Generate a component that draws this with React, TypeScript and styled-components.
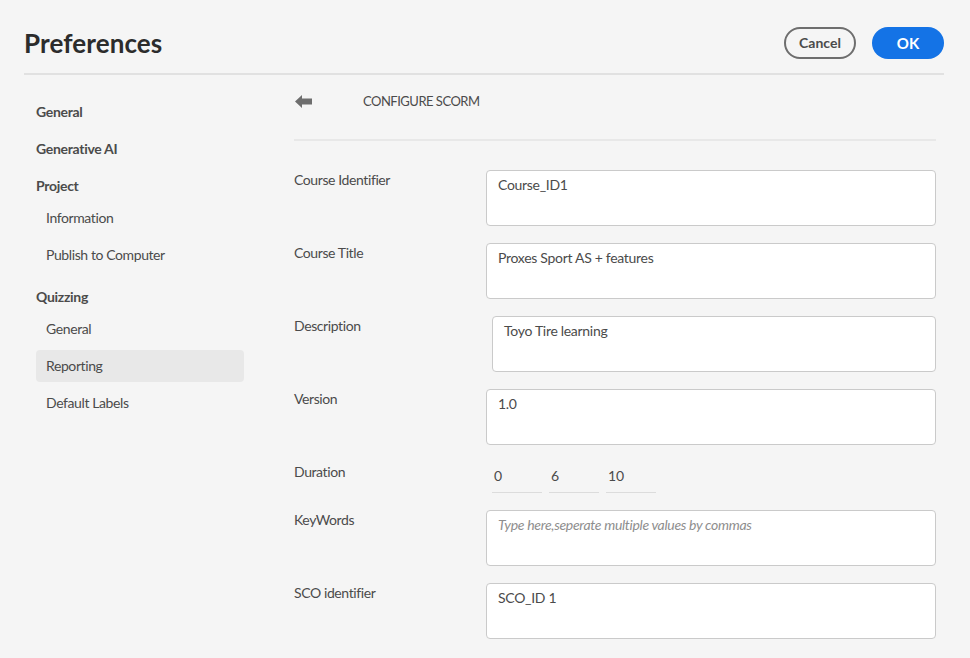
import React from 'react';
import styled, { createGlobalStyle } from 'styled-components';

const GlobalStyle = createGlobalStyle`
  html, body {
    margin: 0;
    padding: 0;
    background: #f5f5f5;
  }
  body {
    font-family: Lato, 'Open Sans', sans-serif;
    color: #4b4b4b;
  }
`;

interface NavGroup {
  title: string;
  items: string[];
}

const navGroups: NavGroup[] = [
  { title: 'General', items: [] },
  { title: 'Generative AI', items: [] },
  { title: 'Project', items: ['Information', 'Publish to Computer'] },
  { title: 'Quizzing', items: ['General', 'Reporting', 'Default Labels'] },
];

const fields = [
  { label: 'Course Identifier', value: 'Course_ID1' },
  { label: 'Course Title', value: 'Proxes Sport AS + features' },
  { label: 'Description', value: 'Toyo Tire learning', shifted: true },
  { label: 'Version', value: '1.0' },
];

const BackArrow = () => (
  <svg width="17" height="13" viewBox="0 0 17 13">
    <polygon points="0,6.5 7,0 7,3.5 17,3.5 17,9.5 7,9.5 7,13" fill="#6e6e6e" />
  </svg>
);

const App = () => {
  return (
    <>
      <GlobalStyle />
      <Page>
        <Header>
          <Title>Preferences</Title>
          <Actions>
            <CancelButton>Cancel</CancelButton>
            <OkButton>OK</OkButton>
          </Actions>
        </Header>
        <Body>
          <Sidebar>
            {navGroups.map((group) => (
              <Group key={group.title}>
                <GroupTitle>{group.title}</GroupTitle>
                {group.items.length > 0 && (
                  <SubList>
                    {group.items.map((item) => (
                      <SubItem key={item} active={group.title === 'Quizzing' && item === 'Reporting'}>
                        {item}
                      </SubItem>
                    ))}
                  </SubList>
                )}
              </Group>
            ))}
          </Sidebar>
          <Content>
            <ContentHeader>
              <BackButton>
                <BackArrow />
              </BackButton>
              <SectionTitle>CONFIGURE SCORM</SectionTitle>
            </ContentHeader>
            <Form>
              {fields.map((f) => (
                <Row key={f.label}>
                  <Label>{f.label}</Label>
                  <TextBox shifted={!!f.shifted}>{f.value}</TextBox>
                </Row>
              ))}
              <Row>
                <Label>Duration</Label>
                <DurationGroup>
                  <DurationField>0</DurationField>
                  <DurationField>6</DurationField>
                  <DurationField>10</DurationField>
                </DurationGroup>
              </Row>
              <Row>
                <Label>KeyWords</Label>
                <TextBox shifted={false}>
                  <Placeholder>Type here,seperate multiple values by commas</Placeholder>
                </TextBox>
              </Row>
              <Row>
                <Label>SCO identifier</Label>
                <TextBox shifted={false}>SCO_ID 1</TextBox>
              </Row>
            </Form>
          </Content>
        </Body>
      </Page>
    </>
  );
};

export default App;

const Page = styled.div`
  padding: 0 26px 0 24px;
  min-height: 658px;
  box-sizing: border-box;
`;

const Header = styled.header`
  height: 75px;
  box-sizing: border-box;
  padding-top: 12px;
  display: flex;
  align-items: center;
  justify-content: space-between;
  border-bottom: 2px solid #e1e1e1;
`;

const Title = styled.h1`
  margin: 0;
  font-size: 26px;
  font-weight: 700;
  color: #2c2c2c;
  letter-spacing: 0.1px;
`;

const Actions = styled.div`
  display: flex;
  gap: 16px;
`;

const CancelButton = styled.button`
  width: 72px;
  height: 32px;
  border-radius: 16px;
  border: 2px solid #6e6e6e;
  background: transparent;
  color: #4b4b4b;
  font-family: Lato, sans-serif;
  font-size: 14px;
  font-weight: 700;
  cursor: pointer;
`;

const OkButton = styled.button`
  width: 72px;
  height: 32px;
  border-radius: 16px;
  border: none;
  background: #1473e6;
  color: #fff;
  font-family: Lato, sans-serif;
  font-size: 15px;
  font-weight: 700;
  cursor: pointer;
`;

const Body = styled.div`
  display: grid;
  grid-template-columns: 270px 642px;
`;

const Sidebar = styled.nav`
  padding: 21px 50px 0 12px;
  display: flex;
  flex-direction: column;
  gap: 5px;
`;

const Group = styled.div`
  display: flex;
  flex-direction: column;
`;

const GroupTitle = styled.div`
  height: 32px;
  line-height: 32px;
  font-size: 14px;
  font-weight: 700;
  letter-spacing: -0.3px;
  color: #4b4b4b;
`;

const SubList = styled.div`
  display: flex;
  flex-direction: column;
  gap: 5px;
  margin-bottom: 5px;
`;

const SubItem = styled.div<{ active: boolean }>`
  height: 32px;
  line-height: 32px;
  padding-left: 10px;
  font-size: 14px;
  letter-spacing: -0.4px;
  color: #4b4b4b;
  border-radius: 4px;
  background: ${({ active }) => (active ? '#e8e8e8' : 'transparent')};
`;

const Content = styled.main`
  display: flex;
  flex-direction: column;
`;

const ContentHeader = styled.div`
  height: 66px;
  box-sizing: border-box;
  padding-top: 18px;
  display: flex;
  align-items: flex-start;
  border-bottom: 2px solid #e8e8e8;
`;

const BackButton = styled.div`
  width: 17px;
  height: 16px;
  display: flex;
  align-items: center;
  margin-left: 1px;
`;

const SectionTitle = styled.div`
  margin-left: 51px;
  font-size: 13px;
  line-height: 16px;
  letter-spacing: -0.5px;
  color: #4b4b4b;
`;

const Form = styled.div`
  padding-top: 29px;
  display: flex;
  flex-direction: column;
  gap: 17px;
`;

const Row = styled.div`
  display: grid;
  grid-template-columns: 192px 1fr;
  align-items: start;
`;

const Label = styled.div`
  font-size: 14px;
  line-height: 20px;
  letter-spacing: -0.4px;
  color: #4b4b4b;
`;

const TextBox = styled.div<{ shifted: boolean }>`
  margin-left: ${({ shifted }) => (shifted ? '6px' : '0')};
  height: 56px;
  box-sizing: border-box;
  padding: 4px 11px;
  background: #fff;
  border: 1px solid #cacaca;
  border-radius: 4px;
  font-size: 14px;
  line-height: 20px;
  letter-spacing: -0.3px;
  color: #4b4b4b;
`;

const Placeholder = styled.span`
  font-style: italic;
  color: #8e8e8e;
`;

const DurationGroup = styled.div`
  display: flex;
  gap: 7px;
  margin-left: 6px;
`;

const DurationField = styled.div`
  width: 50px;
  height: 31px;
  box-sizing: border-box;
  padding: 4px 2px;
  border-bottom: 1px solid #dcdcdc;
  font-size: 14px;
  line-height: 20px;
  color: #4b4b4b;
`;
